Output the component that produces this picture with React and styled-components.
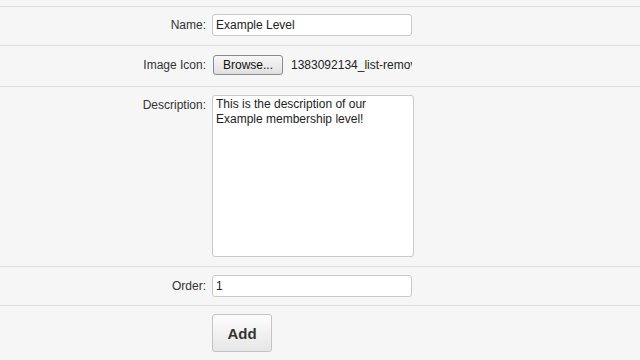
import styled, { createGlobalStyle } from "styled-components";

const Global = createGlobalStyle`
  html, body {
    margin: 0;
    background: #f6f6f6;
    font-family: "Liberation Sans", Arial, sans-serif;
    font-size: 12px;
    color: #333;
  }
`;

const Form = styled.div`
  padding-top: 6px;
`;

const Row = styled.div`
  display: grid;
  grid-template-columns: 206px 1fr;
  column-gap: 6px;
  align-items: ${(p) => (p.$top ? "start" : "center")};
  padding: ${(p) => p.$pad || "8px 0"};
  border-top: 1px solid #dddddd;
`;

const Label = styled.label`
  text-align: right;
  color: #333;
  padding-top: ${(p) => (p.$top ? "3px" : "0")};
`;

const Input = styled.input`
  box-sizing: border-box;
  width: 200px;
  height: 22px;
  margin: 0;
  padding: 0 3px;
  border: 1px solid #c9c9c9;
  border-radius: 3px;
  background: #fff;
  font-family: "Liberation Sans", Arial, sans-serif;
  font-size: 12px;
  color: #222;
`;

const TextArea = styled.textarea`
  box-sizing: border-box;
  display: block;
  width: 202px;
  height: 162px;
  margin: 0;
  padding: 1px 3px;
  border: 1px solid #c9c9c9;
  border-radius: 3px;
  background: #fff;
  font-family: "Liberation Sans", Arial, sans-serif;
  font-size: 12px;
  line-height: 15px;
  color: #222;
  resize: none;
`;

const FileField = styled.div`
  display: flex;
  align-items: center;
  gap: 8px;
  width: 200px;
  overflow: hidden;
  white-space: nowrap;
`;

const BrowseBtn = styled.button`
  flex: none;
  box-sizing: border-box;
  width: 70px;
  height: 20px;
  padding: 0;
  margin-left: 1px;
  border: 1px solid #8a8a8a;
  border-radius: 3px;
  background: linear-gradient(#f7f7f7, #e0e0e0);
  font-family: "Liberation Sans", Arial, sans-serif;
  font-size: 12px;
  color: #111;
`;

const FileName = styled.span`
  color: #222;
`;

const AddBtn = styled.button`
  box-sizing: border-box;
  width: 60px;
  height: 38px;
  padding: 0;
  border: 1px solid #c4c4c4;
  border-radius: 3px;
  background: linear-gradient(#fdfdfd, #e6e6e6);
  font-family: "Liberation Sans", Arial, sans-serif;
  font-size: 15px;
  font-weight: bold;
  color: #333;
`;

export default function App() {
  return (
    <Form>
      <Global />
      <Row $pad="7px 0 9px">
        <Label>Name:</Label>
        <Input defaultValue="Example Level" />
      </Row>
      <Row $pad="9px 0 11px">
        <Label>Image Icon:</Label>
        <FileField>
          <BrowseBtn>Browse...</BrowseBtn>
          <FileName>1383092134_list-remove.png</FileName>
        </FileField>
      </Row>
      <Row $top $pad="8px 0 9px">
        <Label $top>Description:</Label>
        <TextArea defaultValue="This is the description of our Example membership level!" />
      </Row>
      <Row>
        <Label>Order:</Label>
        <Input defaultValue="1" />
      </Row>
      <Row>
        <span />
        <AddBtn>Add</AddBtn>
      </Row>
    </Form>
  );
}
